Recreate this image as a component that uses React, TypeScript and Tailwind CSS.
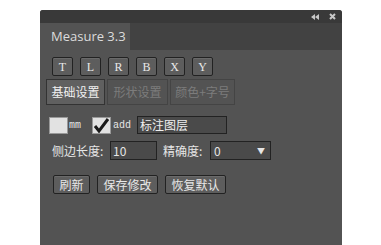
import React from "react";

const cjk = { fontFamily: '"Noto Sans CJK SC", "Noto Sans", sans-serif' };
const serifMono = { fontFamily: '"Liberation Serif", "DejaVu Serif", serif' };
const mono = { fontFamily: '"Liberation Mono", "DejaVu Sans Mono", monospace' };

const btn =
  "border border-[#222] rounded-[2px] bg-[#5d5d5d] text-[#e8e8e8] flex items-center justify-center shadow-[inset_0_1px_0_#6a6a6a] whitespace-nowrap";

export default function App() {
  const letters = ["T", "L", "R", "B", "X", "Y"];
  return (
    <div className="w-[381px] h-[245px] bg-white overflow-hidden">
      <div className="ml-[40px] mt-[10px] w-[302px] h-[235px] bg-[#535353] rounded-t-[3px] flex flex-col overflow-hidden">
        <div className="h-[13px] bg-[#393939] flex items-center justify-end pr-[6px] gap-[10px]">
          <svg width="8" height="6" viewBox="0 0 8 6">
            <path d="M4 0 L0 3 L4 6 Z M8 0 L4 3 L8 6 Z" fill="#c8c8c8" />
          </svg>
          <svg width="7" height="7" viewBox="0 0 7 7">
            <path d="M1 1 L6 6 M6 1 L1 6" stroke="#c8c8c8" strokeWidth="2" />
          </svg>
        </div>
        <div className="h-[27px] bg-[#424242] flex">
          <div
            className="w-[90px] bg-[#535353] text-[#dcdcdc] text-[13px] pl-[11px] flex items-center"
            style={{ fontFamily: '"Open Sans", "Noto Sans", sans-serif' }}
          >
            Measure 3.3
          </div>
        </div>
        <div className="pl-[12px] pt-[7px] flex gap-[7px]">
          {letters.map((l) => (
            <div key={l} className={`${btn} w-[21px] h-[19px] text-[12px]`} style={serifMono}>
              {l}
            </div>
          ))}
        </div>
        <div className="pl-[6px] pt-[3px] flex gap-[2px] text-[12px] whitespace-nowrap" style={cjk}>
          <div className="w-[59px] h-[26px] bg-[#606060] border border-[#333] text-[#f0f0f0] flex items-center justify-center">
            基础设置
          </div>
          <div className="w-[61px] h-[26px] border border-[#444] text-[#7c7c7c] flex items-center justify-center">
            形状设置
          </div>
          <div className="w-[65px] h-[26px] border border-[#444] text-[#7c7c7c] flex items-center justify-center">
            颜色+字号
          </div>
        </div>
        <div className="pl-[9px] pt-[11px] flex items-center h-[29px] whitespace-nowrap">
          <div className="shrink-0 w-[19px] h-[17px] bg-[#e2e2e2] border border-[#999]" />
          <span className="shrink-0 text-[10px] text-[#e6e6e6] ml-[1px]" style={mono}>mm</span>
          <div className="shrink-0 ml-[11px] w-[19px] h-[17px] bg-[#e2e2e2] border border-[#999] flex items-center justify-center">
            <svg width="17" height="15" viewBox="0 0 17 15">
              <path d="M2 8 L6 13 L15 1" fill="none" stroke="#1a1a1a" strokeWidth="3" />
            </svg>
          </div>
          <span className="shrink-0 text-[10px] text-[#e6e6e6] ml-[2px]" style={mono}>add</span>
          <div
            className="shrink-0 ml-[6px] w-[90px] h-[18px] bg-[#4a4a4a] border border-[#222] text-[#f0f0f0] text-[12px] pl-[2px] flex items-center"
            style={cjk}
          >
            标注图层
          </div>
        </div>
        <div className="pl-[12px] pt-[7px] flex items-center text-[12px] text-[#e6e6e6] whitespace-nowrap" style={cjk}>
          <span className="w-[58px]">侧边长度:</span>
          <div className="w-[47px] h-[19px] bg-[#4a4a4a] border border-[#222] pl-[2px] flex items-center">10</div>
          <span className="ml-[6px] w-[47px]">精确度:</span>
          <div className="w-[61px] h-[19px] bg-[#4a4a4a] border border-[#222] pl-[3px] pr-[5px] flex items-center justify-between">
            <span>0</span>
            <span className="text-[8px]">▼</span>
          </div>
        </div>
        <div className="pl-[13px] pt-[15px] flex gap-[7px] text-[12px]" style={cjk}>
          <div className={`${btn} w-[37px] h-[19px]`}>刷新</div>
          <div className={`${btn} w-[61px] h-[19px]`}>保存修改</div>
          <div className={`${btn} w-[61px] h-[19px]`}>恢复默认</div>
        </div>
      </div>
    </div>
  );
}
